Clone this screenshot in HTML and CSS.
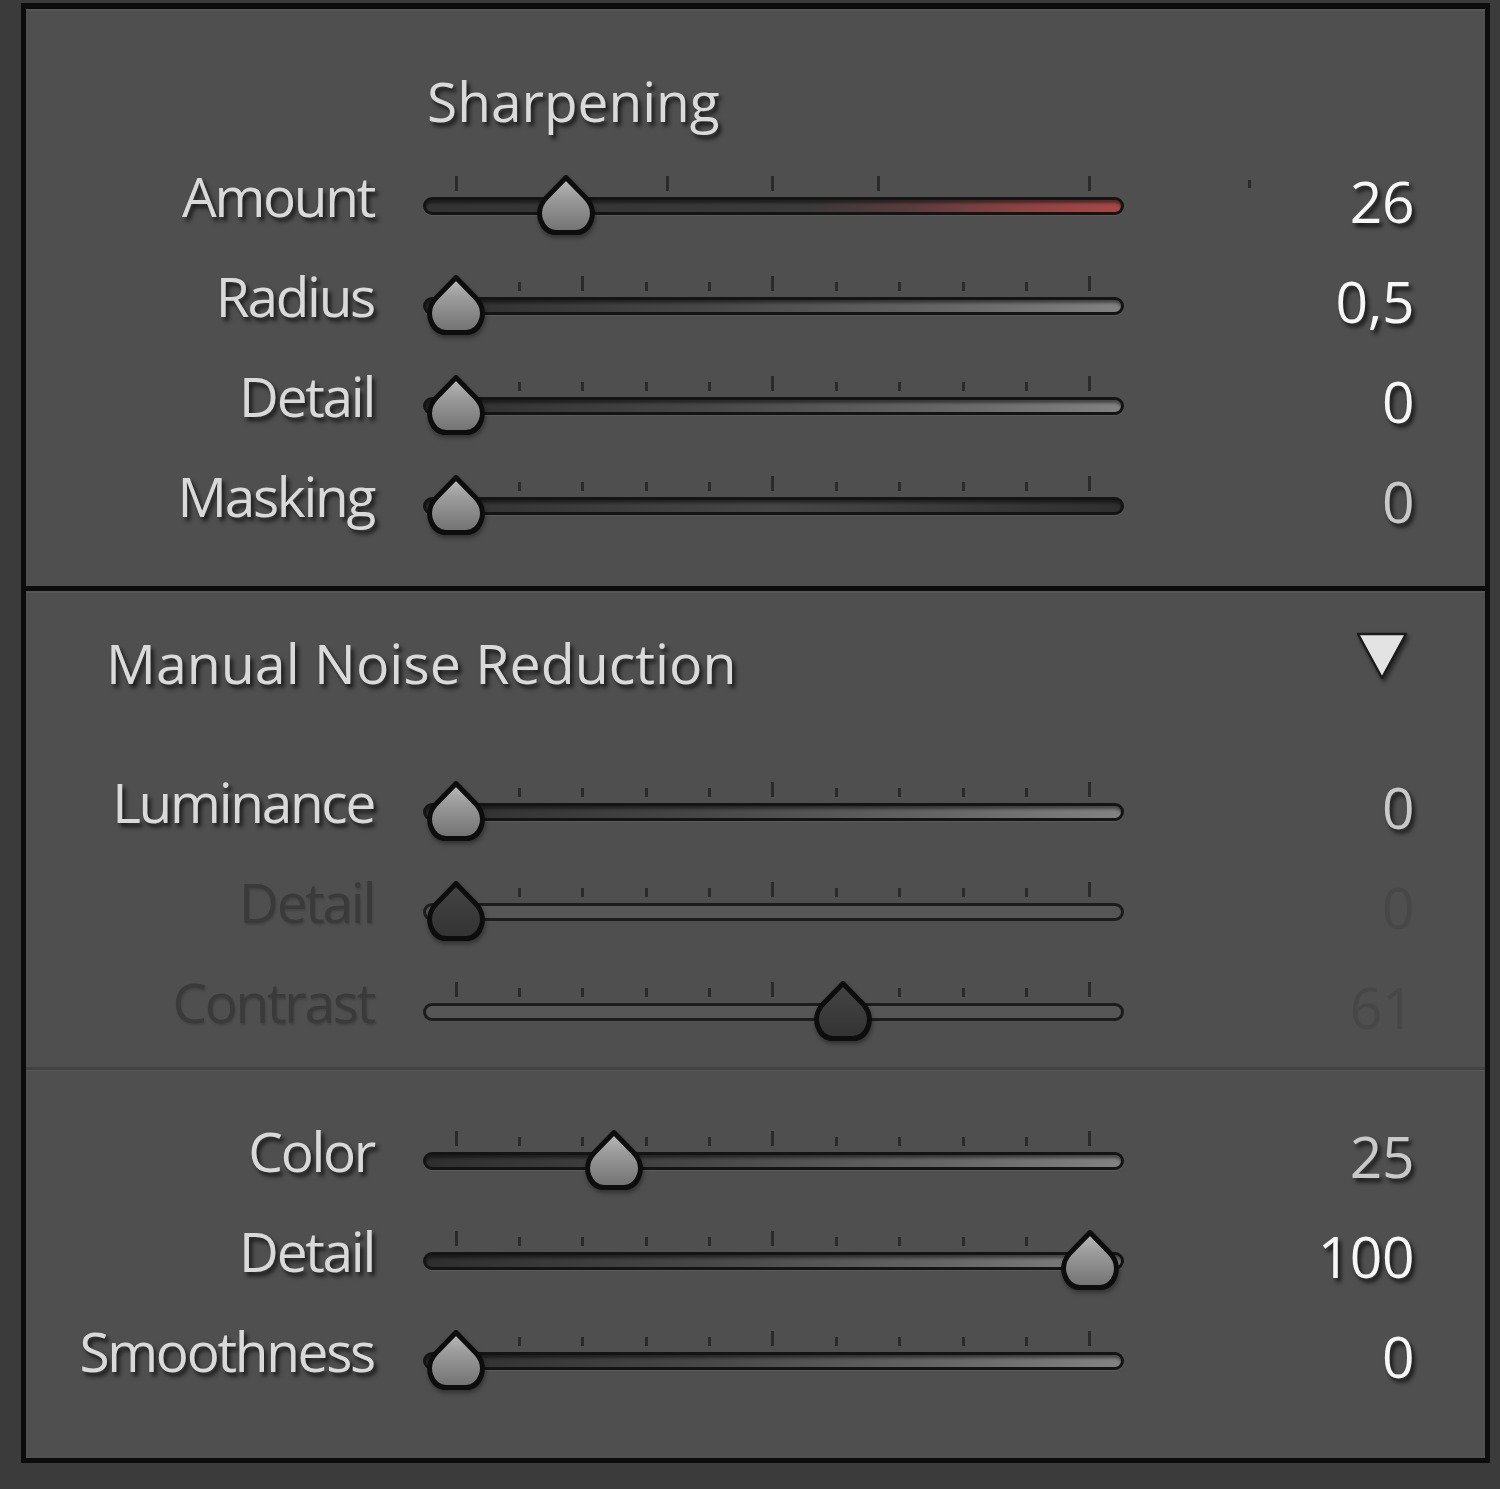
FILE: index.html
```html
<!DOCTYPE html>
<html lang="en">
<head>
<meta charset="utf-8">
<title>Detail panel</title>
<link rel="stylesheet" href="styles.css">
</head>
<body>
<div class="panel">
  <section class="sec sec-sharp">
    <h2 class="sec-title sharp-title">Sharpening</h2>
    <div class="rows">
      <div class="row">
        <span class="label">Amount</span>
        <div class="slider">
          <div class="ticks"><i class="tk tall"></i><i class="tk tall gone"></i><i class="tk tall"></i><i class="tk tall"></i><i class="tk tall"></i><i class="tk tall gone"></i><i class="tk tall"></i></div>
          <div class="track tr-amount"></div>
          <svg class="thumb" style="left:113px" viewBox="0 0 60 62"><use href="#knob"/></svg>
        </div>
        <span class="value v-bright v-amount">26</span>
      </div>
      <div class="row">
        <span class="label">Radius</span>
        <div class="slider">
          <div class="ticks"><i class="tk tall"></i><i class="tk"></i><i class="tk tall"></i><i class="tk"></i><i class="tk"></i><i class="tk tall"></i><i class="tk"></i><i class="tk"></i><i class="tk"></i><i class="tk"></i><i class="tk tall"></i></div>
          <div class="track tr-ramp"></div>
          <svg class="thumb" style="left:3px" viewBox="0 0 60 62"><use href="#knob"/></svg>
        </div>
        <span class="value v-bright">0,5</span>
      </div>
      <div class="row">
        <span class="label">Detail</span>
        <div class="slider">
          <div class="ticks"><i class="tk tall"></i><i class="tk"></i><i class="tk"></i><i class="tk"></i><i class="tk"></i><i class="tk tall"></i><i class="tk"></i><i class="tk"></i><i class="tk"></i><i class="tk"></i><i class="tk tall"></i></div>
          <div class="track tr-ramp"></div>
          <svg class="thumb" style="left:3px" viewBox="0 0 60 62"><use href="#knob"/></svg>
        </div>
        <span class="value v-bright">0</span>
      </div>
      <div class="row">
        <span class="label">Masking</span>
        <div class="slider">
          <div class="ticks"><i class="tk tall"></i><i class="tk"></i><i class="tk"></i><i class="tk"></i><i class="tk"></i><i class="tk tall"></i><i class="tk"></i><i class="tk"></i><i class="tk"></i><i class="tk"></i><i class="tk tall"></i></div>
          <div class="track tr-mask"></div>
          <svg class="thumb" style="left:3px" viewBox="0 0 60 62"><use href="#knob"/></svg>
        </div>
        <span class="value v-soft">0</span>
      </div>
    </div>
  </section>

  <section class="sec sec-noise">
    <div class="sec-head">
      <h2 class="sec-title">Manual Noise Reduction</h2>
      <svg class="disclosure" viewBox="0 0 56 52" aria-hidden="true">
        <polygon points="4,4 52,4 28,48" fill="#e3e3e3" stroke="#1c1c1c" stroke-width="2.5" stroke-linejoin="round"/>
      </svg>
    </div>
    <div class="group group-lum">
      <div class="row">
        <span class="label">Luminance</span>
        <div class="slider">
          <div class="ticks"><i class="tk tall"></i><i class="tk"></i><i class="tk"></i><i class="tk"></i><i class="tk"></i><i class="tk tall"></i><i class="tk"></i><i class="tk"></i><i class="tk"></i><i class="tk"></i><i class="tk tall"></i></div>
          <div class="track tr-ramp"></div>
          <svg class="thumb" style="left:3px" viewBox="0 0 60 62"><use href="#knob"/></svg>
        </div>
        <span class="value v-soft">0</span>
      </div>
      <div class="row off">
        <span class="label">Detail</span>
        <div class="slider">
          <div class="ticks"><i class="tk tall"></i><i class="tk"></i><i class="tk"></i><i class="tk"></i><i class="tk"></i><i class="tk tall"></i><i class="tk"></i><i class="tk"></i><i class="tk"></i><i class="tk"></i><i class="tk tall"></i></div>
          <div class="track tr-off"></div>
          <svg class="thumb" style="left:3px" viewBox="0 0 60 62"><use href="#knob-off"/></svg>
        </div>
        <span class="value">0</span>
      </div>
      <div class="row off">
        <span class="label">Contrast</span>
        <div class="slider">
          <div class="ticks"><i class="tk tall"></i><i class="tk"></i><i class="tk"></i><i class="tk"></i><i class="tk"></i><i class="tk tall"></i><i class="tk"></i><i class="tk"></i><i class="tk"></i><i class="tk"></i><i class="tk tall"></i></div>
          <div class="track tr-off"></div>
          <svg class="thumb" style="left:390px" viewBox="0 0 60 62"><use href="#knob-off"/></svg>
        </div>
        <span class="value">61</span>
      </div>
    </div>
    <div class="group group-color">
      <div class="row">
        <span class="label">Color</span>
        <div class="slider">
          <div class="ticks"><i class="tk tall"></i><i class="tk"></i><i class="tk"></i><i class="tk"></i><i class="tk"></i><i class="tk tall"></i><i class="tk"></i><i class="tk"></i><i class="tk"></i><i class="tk"></i><i class="tk tall"></i></div>
          <div class="track tr-ramp"></div>
          <svg class="thumb" style="left:161px" viewBox="0 0 60 62"><use href="#knob"/></svg>
        </div>
        <span class="value v-soft">25</span>
      </div>
      <div class="row">
        <span class="label">Detail</span>
        <div class="slider">
          <div class="ticks"><i class="tk tall"></i><i class="tk"></i><i class="tk"></i><i class="tk"></i><i class="tk"></i><i class="tk tall"></i><i class="tk"></i><i class="tk"></i><i class="tk"></i><i class="tk"></i><i class="tk tall"></i></div>
          <div class="track tr-ramp"></div>
          <svg class="thumb" style="left:637px" viewBox="0 0 60 62"><use href="#knob"/></svg>
        </div>
        <span class="value v-bright">100</span>
      </div>
      <div class="row">
        <span class="label">Smoothness</span>
        <div class="slider">
          <div class="ticks"><i class="tk tall"></i><i class="tk"></i><i class="tk"></i><i class="tk"></i><i class="tk"></i><i class="tk tall"></i><i class="tk"></i><i class="tk"></i><i class="tk"></i><i class="tk"></i><i class="tk tall"></i></div>
          <div class="track tr-ramp"></div>
          <svg class="thumb" style="left:3px" viewBox="0 0 60 62"><use href="#knob"/></svg>
        </div>
        <span class="value v-bright">0</span>
      </div>
    </div>
  </section>
</div>

<svg class="defs" width="0" height="0" aria-hidden="true">
  <defs>
    <linearGradient id="knobFill" x1="0" y1="0" x2="0" y2="1">
      <stop offset="0" stop-color="#bdbdbd"/>
      <stop offset="0.35" stop-color="#9c9c9c"/>
      <stop offset="1" stop-color="#717171"/>
    </linearGradient>
    <linearGradient id="knobOff" x1="0" y1="0" x2="0" y2="1">
      <stop offset="0" stop-color="#444444"/>
      <stop offset="1" stop-color="#333333"/>
    </linearGradient>
    <symbol id="knob" viewBox="0 0 60 62">
      <path d="M30 3.5 L49 23 C56 30 58 39 55 47 C52 55 46 58.5 40 58.5 L20 58.5 C14 58.5 8 55 5 47 C2 39 4 30 11 23 Z" fill="url(#knobFill)" stroke="#0d0d0d" stroke-width="5" stroke-linejoin="round"/>
    </symbol>
    <symbol id="knob-off" viewBox="0 0 60 62">
      <path d="M30 3.5 L49 23 C56 30 58 39 55 47 C52 55 46 58.5 40 58.5 L20 58.5 C14 58.5 8 55 5 47 C2 39 4 30 11 23 Z" fill="url(#knobOff)" stroke="#0d0d0d" stroke-width="5" stroke-linejoin="round"/>
    </symbol>
  </defs>
</svg>
</body>
</html>
```

FILE: styles.css
```css
html, body {
  margin: 0;
}

body {
  background: #3b3b3b;
  font-family: "Open Sans", "Noto Sans", sans-serif;
  padding: 3px 10px 0 21px;
  height: 1489px;
  box-sizing: border-box;
  overflow: hidden;
}

.panel {
  width: 1469px;
  box-sizing: border-box;
  border: 5px solid #0c0c0c;
  border-top-width: 6px;
  background: #4f4f4f;
}

.sec {
  box-shadow: inset 0 2px 0 #575757;
}

.sec-sharp {
  padding: 60px 0 30px;
  border-bottom: 5px solid #0c0c0c;
}

.sec-noise {
  padding-top: 40px;
}

.sec-title {
  margin: 0;
  font-weight: 400;
  font-size: 55px;
  line-height: 64px;
  color: #dadada;
  text-shadow: 3px 4px 4px rgba(0, 0, 0, 0.7);
}

.sharp-title {
  padding-left: 401px;
  margin-bottom: 23px;
}

.sec-head {
  display: flex;
  justify-content: space-between;
  align-items: flex-start;
  padding: 0 75px 0 80px;
  margin-bottom: 67px;
}

.sec-head .sec-title {
  font-size: 55.5px;
  letter-spacing: 0;
}

.disclosure {
  width: 56px;
  height: 52px;
  margin-top: -1px;
  filter: drop-shadow(2px 3px 2px rgba(0, 0, 0, 0.55));
}

.group-lum {
  padding-bottom: 5px;
}

.group-color {
  border-top: 3px solid #434343;
  box-shadow: inset 0 1px 0 #565656;
  padding: 41px 0 47px;
}

.row {
  display: grid;
  grid-template-columns: 397px 701px 290px;
  height: 100px;
  align-items: start;
}

.label {
  text-align: right;
  padding-right: 49px;
  margin-top: 8px;
  font-size: 55px;
  line-height: 64px;
  letter-spacing: -2.3px;
  color: #d9d9d9;
  text-shadow: 3px 4px 4px rgba(0, 0, 0, 0.7);
  white-space: nowrap;
}

.value {
  position: relative;
  text-align: right;
  margin-top: 13px;
  font-size: 57px;
  line-height: 64px;
  letter-spacing: -0.5px;
  white-space: nowrap;
}

.v-bright {
  color: #f6f6f6;
  text-shadow: 3px 4px 4px rgba(0, 0, 0, 0.75);
}

.v-soft {
  color: #c9c9c9;
  text-shadow: 3px 4px 4px rgba(0, 0, 0, 0.7);
}

.row.off .label {
  color: #3a3a3a;
  text-shadow: 1px 2px 2px rgba(0, 0, 0, 0.15);
}

.row.off .value {
  color: #474747;
}

.v-amount::before {
  content: "";
  position: absolute;
  left: 124px;
  top: 11px;
  width: 3px;
  height: 8px;
  background: #2a2a2a;
}

.slider {
  position: relative;
  height: 100px;
  box-sizing: border-box;
  padding-top: 20px;
}

.ticks {
  height: 15px;
  display: flex;
  justify-content: space-between;
  align-items: flex-end;
  padding: 0 32.5px 0 31.5px;
}

.tk {
  display: block;
  width: 3px;
  height: 9px;
  background: #2a2a2a;
}

.tk.tall {
  height: 15px;
}

.tk.gone {
  visibility: hidden;
}

.track {
  margin-top: 6px;
  height: 18px;
  box-sizing: border-box;
  border: 3px solid #141414;
  border-radius: 9px;
  box-shadow: 0 1px 0 rgba(255, 255, 255, 0.07), inset 0 4px 3px -1px rgba(0, 0, 0, 0.45);
}

.tr-ramp {
  background: linear-gradient(90deg, #2e2e2e 0%, #474747 40%, #666666 75%, #828282 100%);
}

.tr-amount {
  background: linear-gradient(90deg, #333333 0%, #3a3a3a 55%, #5a3c3c 70%, #8a4343 85%, #a84848 100%);
}

.tr-mask {
  background: linear-gradient(90deg, #323232 0%, #464646 50%, #2f2f2f 100%);
}

.tr-off {
  background: #565656;
  box-shadow: none;
  border-color: #1c1c1c;
}

.thumb {
  position: absolute;
  top: 18px;
  width: 60px;
  height: 62px;
  filter: drop-shadow(1px 3px 2px rgba(0, 0, 0, 0.35));
}

.defs {
  position: absolute;
  width: 0;
  height: 0;
  overflow: hidden;
}
```
